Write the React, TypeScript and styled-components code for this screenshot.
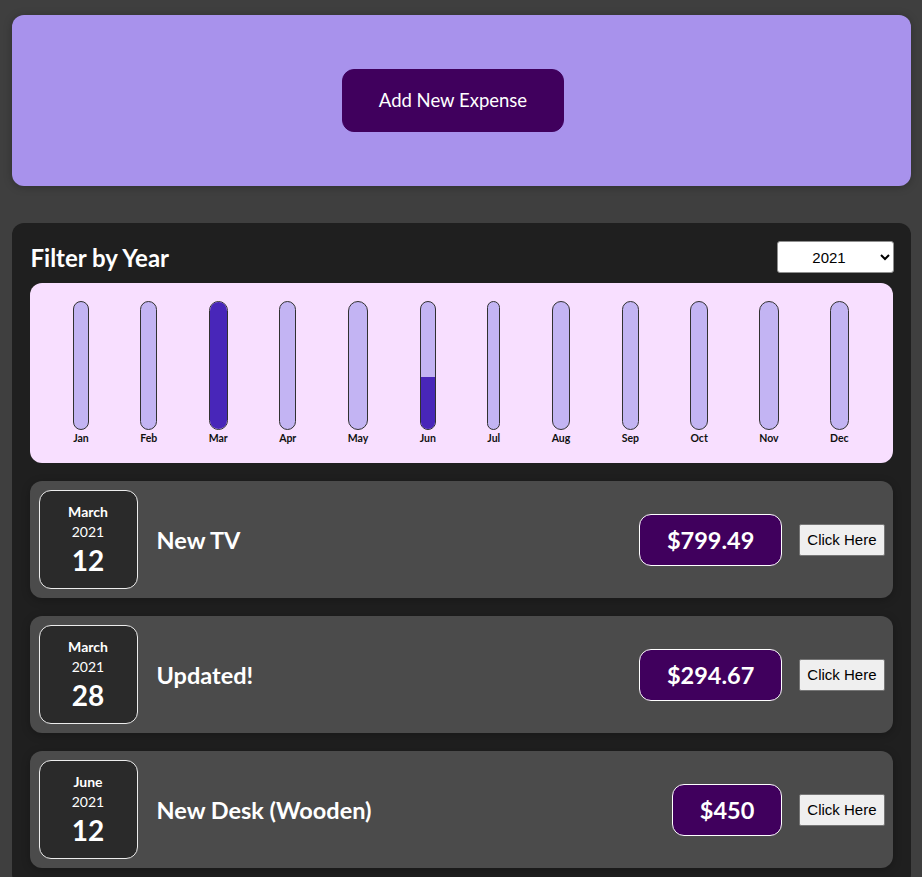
import React from "react";
import styled, { createGlobalStyle } from "styled-components";

const GlobalStyle = createGlobalStyle`
  html, body { margin: 0; padding: 0; }
  body {
    background: #3f3f3f;
    font-family: Lato, "Noto Sans", sans-serif;
  }
  * { box-sizing: border-box; }
`;

const Page = styled.div`
  padding: 15px 0 40px;
`;

const NewExpenseCard = styled.div`
  width: 899px;
  margin: 0 auto;
  background: #a892ec;
  border-radius: 12px;
  padding: 54px 18px;
  display: flex;
  justify-content: center;
  box-shadow: 0 1px 8px rgba(0, 0, 0, 0.25);
`;

const AddButton = styled.button`
  font-family: Lato, sans-serif;
  font-size: 18.5px;
  line-height: 25px;
  color: #fff;
  background: #40005d;
  border: 1px solid #40005d;
  border-radius: 12px;
  padding: 18px 0;
  margin: 0 17px 0 1px;
  width: 222px;
  white-space: nowrap;
  cursor: pointer;
`;

const ExpensesPanel = styled.div`
  width: 899px;
  margin: 37px auto 0;
  background: #1f1f1f;
  border-radius: 12px;
  padding: 18px;
`;

const FilterRow = styled.div`
  display: flex;
  align-items: center;
  justify-content: space-between;
  margin-bottom: 10px;
  padding-left: 1px;
`;

const FilterLabel = styled.label`
  color: #fff;
  font-weight: 700;
  font-size: 24px;
`;

const YearSelect = styled.select`
  width: 117px;
  height: 32px;
  margin-right: -1px;
  font-family: "Liberation Sans", Arial, sans-serif;
  font-size: 15px;
  text-align: center;
  text-align-last: center;
  border: 1px solid #8f8f8f;
  border-radius: 3px;
  background: #fff;
  color: #000;
`;

const Chart = styled.div`
  height: 180px;
  padding: 18px;
  border-radius: 12px;
  background: #f8dfff;
  display: flex;
  justify-content: space-around;
`;

const BarColumn = styled.div`
  height: 100%;
  display: flex;
  flex-direction: column;
  align-items: center;
`;

const BarTrack = styled.div`
  flex: 1;
  width: 100%;
  border: 1px solid #313131;
  border-radius: 12px;
  background: #c3b4f3;
  overflow: hidden;
  display: flex;
  flex-direction: column;
  justify-content: flex-end;
`;

const BarFill = styled.div`
  width: 100%;
  background: #4826b9;
`;

const BarLabel = styled.div`
  font-weight: 700;
  font-size: 10.5px;
  line-height: 14px;
  color: #111;
  padding-top: 1px;
`;

const ItemList = styled.ul`
  list-style: none;
  margin: 0;
  padding: 0;
`;

const Item = styled.li`
  display: flex;
  align-items: center;
  margin-top: 18px;
  padding: 9px;
  border-radius: 12px;
  background: #4b4b4b;
  box-shadow: 0 2px 8px rgba(0, 0, 0, 0.25);
`;

const DateBox = styled.div`
  width: 99px;
  height: 99px;
  flex-shrink: 0;
  display: flex;
  flex-direction: column;
  align-items: center;
  justify-content: center;
  border: 1px solid #ececec;
  border-radius: 12px;
  background: #2a2a2a;
  color: #fff;
`;

const DateMonth = styled.div`
  font-size: 14px;
  font-weight: 700;
  line-height: 20px;
`;

const DateYear = styled.div`
  font-size: 14px;
  line-height: 20px;
`;

const DateDay = styled.div`
  font-size: 28px;
  font-weight: 700;
  line-height: 36px;
`;

const Title = styled.h2`
  flex: 1;
  margin: 0 18px 0 19px;
  color: #fff;
  font-size: 23.5px;
  font-weight: 700;
`;

const Price = styled.div`
  color: #fff;
  font-size: 23.5px;
  font-weight: 700;
  line-height: 32px;
  background: #40005d;
  border: 1px solid #fff;
  border-radius: 12px;
  padding: 9px 27px;
  margin-right: 17px;
`;

const ClickButton = styled.button`
  font-family: "Liberation Sans", Arial, sans-serif;
  font-size: 15px;
  height: 32px;
  padding: 0 7px;
  background: #efefef;
  border: 1px solid #767676;
  border-radius: 2px;
  color: #000;
  margin-right: -1px;
`;

const months = ["Jan", "Feb", "Mar", "Apr", "May", "Jun", "Jul", "Aug", "Sep", "Oct", "Nov", "Dec"];

const expenses = [
  { month: "March", year: "2021", day: "12", title: "New TV", amount: 799.49, m: 2 },
  { month: "March", year: "2021", day: "28", title: "Updated!", amount: 294.67, m: 2 },
  { month: "June", year: "2021", day: "12", title: "New Desk (Wooden)", amount: 450, m: 5 },
];

export default function App() {
  const totals = months.map((_, i) =>
    expenses.filter((e) => e.m === i).reduce((s, e) => s + e.amount, 0)
  );
  const max = Math.max(...totals);
  return (
    <Page>
      <GlobalStyle />
      <NewExpenseCard>
        <AddButton>Add New Expense</AddButton>
      </NewExpenseCard>
      <ExpensesPanel>
        <FilterRow>
          <FilterLabel>Filter by Year</FilterLabel>
          <YearSelect defaultValue="2021">
            <option value="2022">2022</option>
            <option value="2021">2021</option>
            <option value="2020">2020</option>
            <option value="2019">2019</option>
          </YearSelect>
        </FilterRow>
        <Chart>
          {months.map((m, i) => (
            <BarColumn key={m}>
              <BarTrack>
                <BarFill style={{ height: `${max > 0 ? Math.round((totals[i] / max) * 100) : 0}%` }} />
              </BarTrack>
              <BarLabel>{m}</BarLabel>
            </BarColumn>
          ))}
        </Chart>
        <ItemList>
          {expenses.map((e) => (
            <Item key={e.title}>
              <DateBox>
                <DateMonth>{e.month}</DateMonth>
                <DateYear>{e.year}</DateYear>
                <DateDay>{e.day}</DateDay>
              </DateBox>
              <Title>{e.title}</Title>
              <Price>${e.amount}</Price>
              <ClickButton>Click Here</ClickButton>
            </Item>
          ))}
        </ItemList>
      </ExpensesPanel>
    </Page>
  );
}
